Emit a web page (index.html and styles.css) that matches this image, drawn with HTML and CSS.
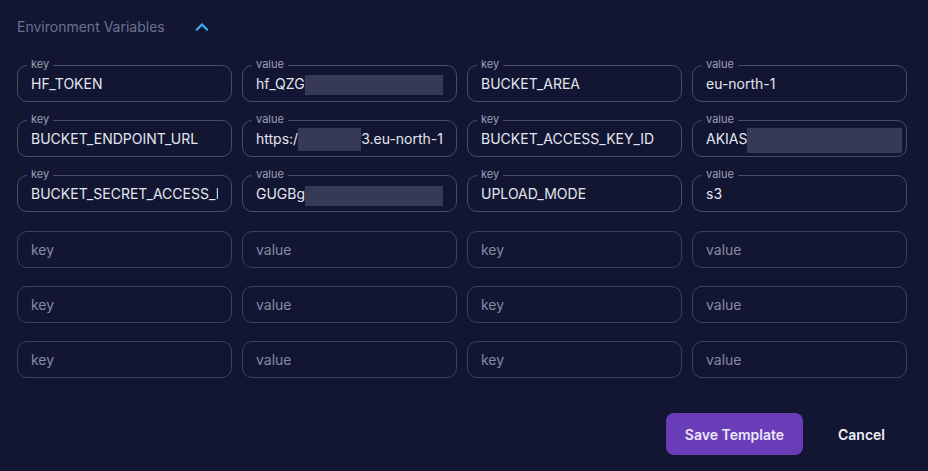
FILE: index.html
```html
<!DOCTYPE html>
<html>
<head>
<meta charset="utf-8">
<link rel="stylesheet" href="styles.css">
</head>
<body>
<div class="panel">
  <div class="header">
    <span class="title">Environment Variables</span>
    <svg class="chev" width="14" height="9" viewBox="0 0 14 9"><path d="M2 7.5 L7 2.5 L12 7.5" fill="none" stroke="#3aaef0" stroke-width="2.2" stroke-linecap="square"/></svg>
  </div>
  <div class="grid">
    <div class="field filled"><span class="lbl">key</span><span class="val">HF_TOKEN</span></div>
    <div class="field filled"><span class="lbl">value</span><span class="val">hf_QZG<span class="mask m1"></span></span></div>
    <div class="field filled"><span class="lbl">key</span><span class="val">BUCKET_AREA</span></div>
    <div class="field filled"><span class="lbl">value</span><span class="val">eu-north-1</span></div>

    <div class="field filled"><span class="lbl">key</span><span class="val">BUCKET_ENDPOINT_URL</span></div>
    <div class="field filled"><span class="lbl">value</span><span class="val">https:/<span class="mask m2"></span>3.eu-north-1.amazonaws.com</span></div>
    <div class="field filled"><span class="lbl">key</span><span class="val">BUCKET_ACCESS_KEY_ID</span></div>
    <div class="field filled"><span class="lbl">value</span><span class="val vis">AKIAS<span class="mask m3"></span></span></div>

    <div class="field filled"><span class="lbl">key</span><span class="val">BUCKET_SECRET_ACCESS_KEY</span></div>
    <div class="field filled"><span class="lbl">value</span><span class="val">GUGBg<span class="mask m4"></span></span></div>
    <div class="field filled"><span class="lbl">key</span><span class="val">UPLOAD_MODE</span></div>
    <div class="field filled"><span class="lbl">value</span><span class="val">s3</span></div>

    <div class="field"><span class="ph">key</span></div>
    <div class="field"><span class="ph">value</span></div>
    <div class="field"><span class="ph">key</span></div>
    <div class="field"><span class="ph">value</span></div>

    <div class="field"><span class="ph">key</span></div>
    <div class="field"><span class="ph">value</span></div>
    <div class="field"><span class="ph">key</span></div>
    <div class="field"><span class="ph">value</span></div>

    <div class="field"><span class="ph">key</span></div>
    <div class="field"><span class="ph">value</span></div>
    <div class="field"><span class="ph">key</span></div>
    <div class="field"><span class="ph">value</span></div>
  </div>
  <div class="actions">
    <button class="btn primary">Save Template</button>
    <button class="btn link">Cancel</button>
  </div>
</div>
</body>
</html>
```
FILE: styles.css
```css
html, body {
  margin: 0;
  padding: 0;
  background: #121632;
  width: 928px;
  height: 471px;
  overflow: hidden;
  font-family: Inter, "Liberation Sans", sans-serif;
}
.panel {
  padding: 16px 21px 0 17px;
}
.header {
  display: flex;
  align-items: center;
  height: 20px;
}
.title {
  font-size: 14px;
  color: #6c7190;
  width: 178px;
}
.chev {
  display: block;
}
.grid {
  margin-top: 29px;
  display: grid;
  grid-template-columns: repeat(4, 215px);
  grid-auto-rows: 37px;
  column-gap: 10px;
  row-gap: 18.2px;
}
.field {
  position: relative;
  box-sizing: border-box;
  height: 37px;
  border: 1px solid #3c4160;
  border-radius: 10px;
  padding: 0 13px;
  display: flex;
  align-items: center;
  font-size: 14px;
  min-width: 0;
}
.field.filled {
  border-color: #474c69;
}
.lbl {
  position: absolute;
  top: -8px;
  left: 9px;
  padding: 0 4px;
  font-size: 11px;
  line-height: 13px;
  color: #9ca0b6;
  background: #121632;
}
.val {
  display: block;
  width: 187px;
  color: #e4e6ef;
  white-space: nowrap;
  overflow: hidden;
  line-height: 25px;
  height: 25px;
}
.val.vis { overflow: visible; }
.ph {
  color: #868aa3;
}
.mask {
  display: inline-block;
  vertical-align: middle;
  background: #363a56;
}
.m1 { width: 147px; height: 20px; }
.m2 { width: 63px; height: 25px; }
.m3 { width: 155px; height: 25px; }
.m4 { width: 144px; height: 20px; }
.actions {
  display: flex;
  justify-content: flex-end;
  align-items: center;
  margin-top: 35.5px;
  padding-right: 3px;
}
.btn {
  font-family: Inter, "Liberation Sans", sans-serif;
  font-size: 14px;
  font-weight: 600;
  border: none;
  cursor: pointer;
}
.primary {
  width: 137px;
  height: 42px;
  background: #6a3db8;
  color: #ebe6fa;
  border-radius: 8px;
}
.link {
  background: none;
  color: #eef0f6;
  margin-left: 21px;
  padding: 0 19px 0 14px;
  height: 42px;
}
```
